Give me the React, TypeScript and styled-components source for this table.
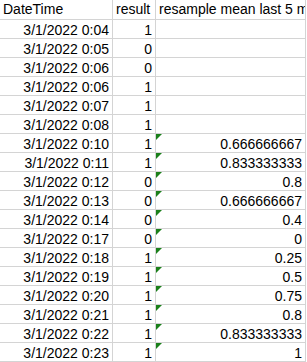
import React from 'react';
import styled, { createGlobalStyle } from 'styled-components';

const GlobalStyle = createGlobalStyle`
  html, body {
    margin: 0;
    padding: 0;
    background: #ffffff;
  }
  body {
    font-family: "Liberation Sans", Arial, sans-serif;
    color: #000000;
  }
  * {
    box-sizing: border-box;
  }
`;

const GRID = '#d4d4d4';

const Sheet = styled.div`
  display: grid;
  grid-template-columns: 113px 43px 150px;
  width: 307px;
  height: 362px;
  overflow: hidden;
`;

const Cell = styled.div<{ $align?: 'left' | 'right'; $head?: boolean }>`
  position: relative;
  height: ${p => (p.$head ? '20px' : '19px')};
  border-right: 1px solid ${GRID};
  border-bottom: 1px solid ${GRID};
  font-size: 14px;
  line-height: 15px;
  padding: ${p => (p.$head ? '2px 3px 0 3px' : '3px 3px 0 2px')};
  text-align: ${p => p.$align ?? 'right'};
  white-space: nowrap;
  overflow: hidden;
`;

// little green error flag excel draws in the top-left corner
const Flag = styled.span`
  position: absolute;
  left: 0;
  top: 0;
  width: 0;
  height: 0;
  border-top: 6px solid #1a801a;
  border-right: 6px solid transparent;
`;

type Row = [string, number, string];

const rows: Row[] = [
  ['0:04', 1, ''],
  ['0:05', 0, ''],
  ['0:06', 0, ''],
  ['0:06', 1, ''],
  ['0:07', 1, ''],
  ['0:08', 1, ''],
  ['0:10', 1, '0.666666667'],
  ['0:11', 1, '0.833333333'],
  ['0:12', 0, '0.8'],
  ['0:13', 0, '0.666666667'],
  ['0:14', 0, '0.4'],
  ['0:17', 0, '0'],
  ['0:18', 1, '0.25'],
  ['0:19', 1, '0.5'],
  ['0:20', 1, '0.75'],
  ['0:21', 1, '0.8'],
  ['0:22', 1, '0.833333333'],
  ['0:23', 1, '1'],
];

const App: React.FC = () => (
  <>
    <GlobalStyle />
    <Sheet>
      <Cell $head $align="left">DateTime</Cell>
      <Cell $head $align="left">result</Cell>
      <Cell $head $align="left">resample mean last 5 min</Cell>
      {rows.map(([time, result, mean], i) => (
        <React.Fragment key={i}>
          <Cell>3/1/2022 {time}</Cell>
          <Cell>{result}</Cell>
          <Cell>
            {mean && <Flag />}
            {mean}
          </Cell>
        </React.Fragment>
      ))}
    </Sheet>
  </>
);

export default App;
